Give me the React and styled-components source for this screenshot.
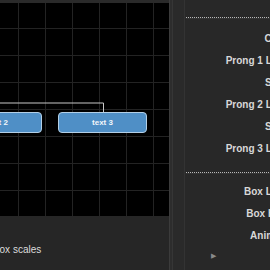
import React from 'react'
import styled, { createGlobalStyle } from 'styled-components'

const GlobalStyle = createGlobalStyle`
	html, body {
		margin: 0;
		padding: 0;
		background: #282828;
		overflow: hidden;
	}
	body {
		font-family: 'Liberation Sans', Arial, sans-serif;
	}
`

const nodes = [
	{ id: 2, label: 'text 2', x: -47, y: 109 },
	{ id: 3, label: 'text 3', x: 58, y: 109 },
]

const settings = [
	{ section: 'layout', rows: ['Curved', 'Prong 1 Length', 'Spread', 'Prong 2 Length', 'Spread', 'Prong 3 Length'] },
	{ section: 'box', rows: ['Box Length', 'Box Height', 'Animation'] },
]

const App = () => (
	<Shell>
		<GlobalStyle />
		<LeftColumn>
			<TopStrip />
			<Canvas>
				<Connectors width='169' height='213'>
					<path d='M -2 100 H 103.5 V 109' fill='none' stroke='#c8c8c8' strokeWidth='1' />
				</Connectors>
				{nodes.map((n) => (
					<Node key={n.id} style={{ left: n.x, top: n.y }}>
						{n.label}
					</Node>
				))}
			</Canvas>
			<BottomPanel>
				<OptionLabel>box scales</OptionLabel>
			</BottomPanel>
		</LeftColumn>
		<Splitter>
			<SplitterTrack />
		</Splitter>
		<Panel>
			{settings.map((s, i) => (
				<Section key={s.section} first={i === 0}>
					<Divider />
					<Rows first={i === 0}>
						{s.rows.map((r, j) => (
							<Row key={j}>
								<Label>{r}</Label>
								<Value />
							</Row>
						))}
					</Rows>
				</Section>
			))}
			<Disclosure>▶</Disclosure>
		</Panel>
	</Shell>
)

const Shell = styled.div`
	display: flex;
	width: 270px;
	height: 270px;
	overflow: hidden;
`

const LeftColumn = styled.div`
	display: flex;
	flex-direction: column;
	width: 169px;
	flex-shrink: 0;
`

const TopStrip = styled.div`
	height: 3px;
	background: #2a2a2a;
`

const Canvas = styled.div`
	position: relative;
	height: 213px;
	overflow: hidden;
	background-color: #000;
	background-image: linear-gradient(to right, #232323 1px, transparent 1px),
		linear-gradient(to bottom, #232323 1px, transparent 1px);
	background-size: 27px 27px;
	background-position: 18px 25px;
`

const Connectors = styled.svg`
	position: absolute;
	left: 0;
	top: 0;
`

const Node = styled.div`
	position: absolute;
	box-sizing: border-box;
	width: 89px;
	height: 21px;
	display: flex;
	align-items: center;
	justify-content: center;
	background: #4f8fc6;
	border: 1px solid #b3cfe6;
	border-radius: 4px;
	color: #f2f6fa;
	font-size: 8px;
	font-weight: bold;
`

const BottomPanel = styled.div`
	flex: 1;
	background: #262626;
	padding-top: 28px;
`

const OptionLabel = styled.div`
	margin-left: -6px;
	font-size: 10px;
	line-height: 12px;
	color: #dcdcdc;
`

const Splitter = styled.div`
	width: 16px;
	flex-shrink: 0;
	display: flex;
	box-sizing: border-box;
	background: #2d2d2d;
	border-left: 1px solid #3b3b3b;
	border-right: 1px solid #333;
`

const SplitterTrack = styled.div`
	margin-left: 2px;
	flex: 1;
	background: #2a2a2a;
	border-left: 1px solid #363636;
`

const Panel = styled.div`
	flex-shrink: 0;
	width: 220px;
	background: #282828;
	padding-top: 17px;
	overflow: hidden;
`

const Section = styled.div`
	margin-top: ${(p) => (p.first ? '0' : '13px')};
`

const Divider = styled.div`
	margin-left: 1px;
	height: 0;
	border-top: 1px dotted #b8b8b8;
	border-bottom: 1px solid #333;
`

const Rows = styled.div`
	margin-top: ${(p) => (p.first ? '8px' : '6px')};
`

const Row = styled.div`
	display: grid;
	grid-template-columns: 114px 1fr;
	column-gap: 8px;
	height: 22px;
	align-items: center;
`

const Label = styled.span`
	text-align: right;
	white-space: nowrap;
	font-size: 10px;
	font-weight: bold;
	color: #d8d8d8;
`

const Value = styled.span``

const Disclosure = styled.div`
	margin: 5px 0 0 26px;
	font-size: 7px;
	line-height: 10px;
	color: #8a8a8a;
`

export default App
